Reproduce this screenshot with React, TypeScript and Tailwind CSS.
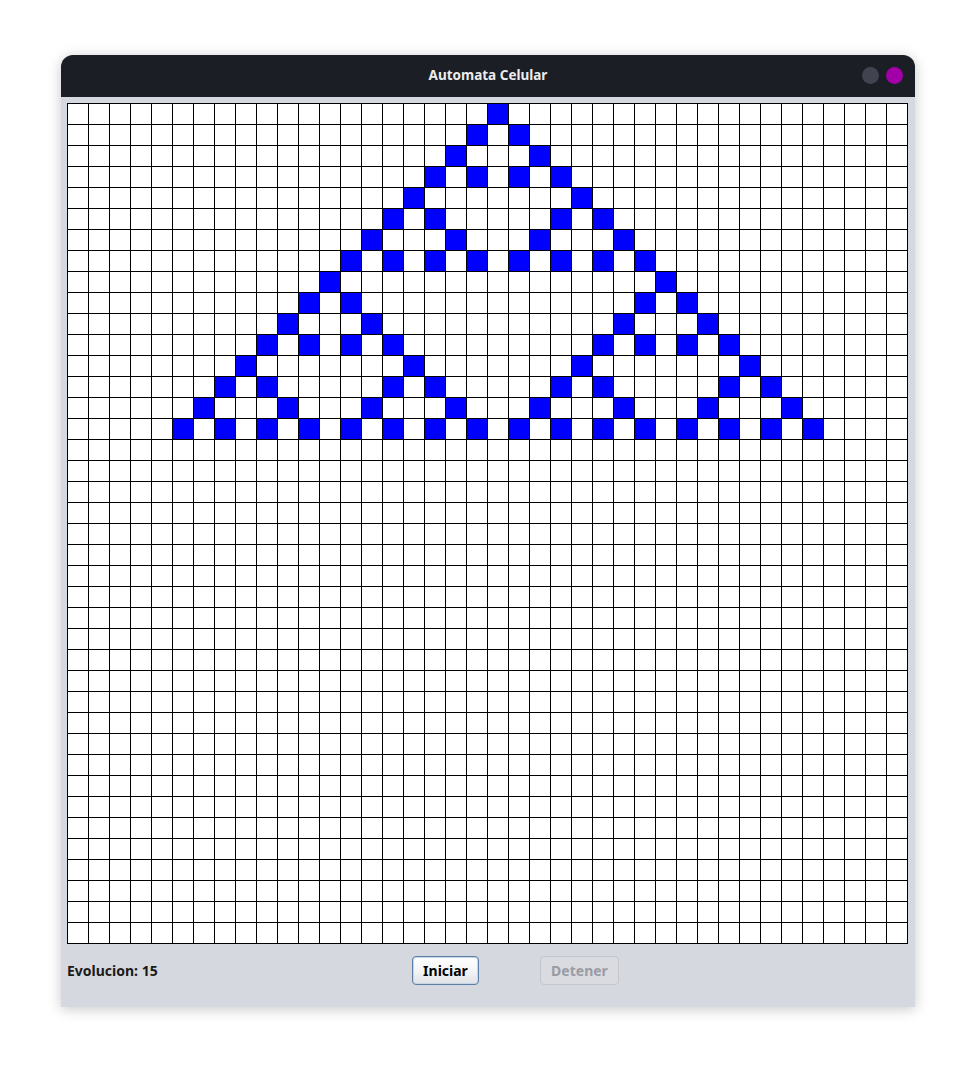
import React from 'react';

const COLS = 40;
const ROWS = 40;
const GENERATIONS = 16;

// regla 90 desde una sola celda en la columna 20
function buildRows(): boolean[][] {
  const rows: boolean[][] = [];
  let cur = Array.from({ length: COLS }, (_, i) => i === 20);
  for (let r = 0; r < ROWS; r++) {
    if (r < GENERATIONS) {
      rows.push(cur);
      cur = cur.map((_, i) => (cur[i - 1] ?? false) !== (cur[i + 1] ?? false));
    } else {
      rows.push(Array(COLS).fill(false));
    }
  }
  return rows;
}

export default function App() {
  const rows = buildRows();

  return (
    <div className="min-h-screen bg-white pt-[55px] font-['Noto_Sans',sans-serif]">
      <div className="mx-auto flex h-[952px] w-[854px] flex-col overflow-hidden rounded-t-[12px] bg-[#d6d8df] shadow-[0_2px_14px_rgba(0,0,0,0.22)]">
        <div className="relative flex h-[42px] shrink-0 items-center justify-center bg-[#1b1e25]">
          <span className="-mt-px text-[13.5px] font-bold text-[#ececec]">Automata Celular</span>
          <div className="absolute right-[12px] top-[12px] flex gap-[7px]">
            <span className="h-[17px] w-[17px] rounded-full bg-[#41434f]" />
            <span className="h-[17px] w-[17px] rounded-full bg-[#a100a8]" />
          </div>
        </div>

        <div className="pl-[6px] pt-[6px]">
          <div className="grid w-[841px] grid-cols-[repeat(40,20px)] gap-px bg-black p-px">
            {rows.map((row, r) =>
              row.map((on, c) => (
                <div key={`${r}-${c}`} className={on ? 'h-[20px] bg-[#0000ff]' : 'h-[20px] bg-white'} />
              ))
            )}
          </div>
        </div>

        <div className="mt-[12px] flex items-center pl-[6px]">
          <span className="w-[345px] text-[14px] font-bold text-[#1a1a1a]">Evolucion: 15</span>
          <button className="h-[29px] w-[67px] rounded-[4px] border border-[#5d7fa8] bg-gradient-to-b from-white via-[#f4f5f7] to-[#dfe1e6] text-[14px] font-bold text-black shadow-[inset_0_0_0_1px_#c7d5e6]">
            Iniciar
          </button>
          <button
            disabled
            className="ml-[61px] h-[29px] w-[79px] rounded-[4px] border border-[#c4c6cd] bg-[#d9dbe1] text-[14px] font-bold text-[#9a9ca3]"
          >
            Detener
          </button>
        </div>
      </div>
    </div>
  );
}
